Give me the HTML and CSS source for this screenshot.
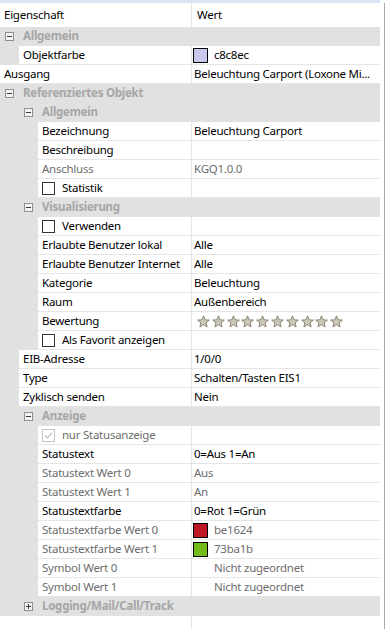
FILE: index.html
```html
<!DOCTYPE html>
<html lang="de">
<head>
    <meta charset="UTF-8">
    <meta name="viewport" content="width=device-width, initial-scale=1.0">
    <title>Eigenschaften</title>
    <link rel="stylesheet" href="styles.css">
</head>
<body>
    <svg width="0" height="0" class="defs">
        <symbol id="star" viewBox="0 0 13 13">
            <polygon points="6.5,0.8 8.1,4.8 12.4,5.1 9.1,7.8 10.1,12 6.5,9.7 2.9,12 3.9,7.8 0.6,5.1 4.9,4.8" fill="#cdc7b9" stroke="#8e8777" stroke-width="1" stroke-linejoin="round"/>
        </symbol>
        <symbol id="minus" viewBox="0 0 9 9">
            <rect x="0.5" y="0.5" width="8" height="8" fill="#f4f4f4" stroke="#8f8f8f"/>
            <rect x="2" y="4" width="5" height="1" fill="#3c3c3c"/>
        </symbol>
        <symbol id="plus" viewBox="0 0 9 9">
            <rect x="0.5" y="0.5" width="8" height="8" fill="#f4f4f4" stroke="#8f8f8f"/>
            <rect x="2" y="4" width="5" height="1" fill="#3c3c3c"/>
            <rect x="4" y="2" width="1" height="5" fill="#3c3c3c"/>
        </symbol>
    </svg>

    <div class="panel">
        <div class="strip"></div>
        <div class="grid">
            <!-- Kopfzeile -->
            <div class="head">
                <div class="hname">Eigenschaft</div>
                <div class="hval">Wert</div>
            </div>

            <div class="row cat d0"><svg class="tog"><use href="#minus"/></svg>Allgemein</div>
            <div class="row d1">
                <div class="name"><div class="lbl">Objektfarbe</div></div>
                <div class="val"><span class="swatch" style="background:#c8c8ec"></span>c8c8ec</div>
            </div>
            <div class="row d0">
                <div class="name"><div class="lbl">Ausgang</div></div>
                <div class="val">Beleuchtung Carport (Loxone Mi...</div>
            </div>

            <div class="row cat d0"><svg class="tog"><use href="#minus"/></svg>Referenziertes Objekt</div>
            <div class="row cat d1"><svg class="tog"><use href="#minus"/></svg>Allgemein</div>
            <div class="row d2">
                <div class="name"><div class="lbl">Bezeichnung</div></div>
                <div class="val">Beleuchtung Carport</div>
            </div>
            <div class="row d2">
                <div class="name"><div class="lbl">Beschreibung</div></div>
                <div class="val"></div>
            </div>
            <div class="row d2 off">
                <div class="name"><div class="lbl">Anschluss</div></div>
                <div class="val">KGQ1.0.0</div>
            </div>
            <div class="row d2">
                <div class="name"><div class="lbl"><span class="chk"></span>Statistik</div></div>
                <div class="val"></div>
            </div>

            <div class="row cat d1"><svg class="tog"><use href="#minus"/></svg>Visualisierung</div>
            <div class="row d2">
                <div class="name"><div class="lbl"><span class="chk"></span>Verwenden</div></div>
                <div class="val"></div>
            </div>
            <div class="row d2">
                <div class="name"><div class="lbl">Erlaubte Benutzer lokal</div></div>
                <div class="val">Alle</div>
            </div>
            <div class="row d2">
                <div class="name"><div class="lbl">Erlaubte Benutzer Internet</div></div>
                <div class="val">Alle</div>
            </div>
            <div class="row d2">
                <div class="name"><div class="lbl">Kategorie</div></div>
                <div class="val">Beleuchtung</div>
            </div>
            <div class="row d2">
                <div class="name"><div class="lbl">Raum</div></div>
                <div class="val">Außenbereich</div>
            </div>
            <div class="row d2">
                <div class="name"><div class="lbl">Bewertung</div></div>
                <div class="val stars">
                    <svg class="star"><use href="#star"/></svg>
                    <svg class="star"><use href="#star"/></svg>
                    <svg class="star"><use href="#star"/></svg>
                    <svg class="star"><use href="#star"/></svg>
                    <svg class="star"><use href="#star"/></svg>
                    <svg class="star"><use href="#star"/></svg>
                    <svg class="star"><use href="#star"/></svg>
                    <svg class="star"><use href="#star"/></svg>
                    <svg class="star"><use href="#star"/></svg>
                    <svg class="star"><use href="#star"/></svg>
                </div>
            </div>
            <div class="row d2">
                <div class="name"><div class="lbl"><span class="chk"></span>Als Favorit anzeigen</div></div>
                <div class="val"></div>
            </div>

            <div class="row d1">
                <div class="name"><div class="lbl">EIB-Adresse</div></div>
                <div class="val">1/0/0</div>
            </div>
            <div class="row d1">
                <div class="name"><div class="lbl">Type</div></div>
                <div class="val">Schalten/Tasten EIS1</div>
            </div>
            <div class="row d1">
                <div class="name"><div class="lbl">Zyklisch senden</div></div>
                <div class="val">Nein</div>
            </div>

            <div class="row cat d1"><svg class="tog"><use href="#minus"/></svg>Anzeige</div>
            <div class="row d2 off">
                <div class="name"><div class="lbl"><span class="chk checked"><svg viewBox="0 0 13 13"><polyline points="2.5,6.5 5.2,9.2 10.5,3.5" fill="none" stroke="#b4b4b4" stroke-width="1.3"/></svg></span>nur Statusanzeige</div></div>
                <div class="val"></div>
            </div>
            <div class="row d2">
                <div class="name"><div class="lbl">Statustext</div></div>
                <div class="val">0=Aus 1=An</div>
            </div>
            <div class="row d2 off">
                <div class="name"><div class="lbl">Statustext Wert 0</div></div>
                <div class="val">Aus</div>
            </div>
            <div class="row d2 off">
                <div class="name"><div class="lbl">Statustext Wert 1</div></div>
                <div class="val">An</div>
            </div>
            <div class="row d2">
                <div class="name"><div class="lbl">Statustextfarbe</div></div>
                <div class="val">0=Rot 1=Grün</div>
            </div>
            <div class="row d2 off">
                <div class="name"><div class="lbl">Statustextfarbe Wert 0</div></div>
                <div class="val"><span class="swatch" style="background:#be1624"></span>be1624</div>
            </div>
            <div class="row d2 off">
                <div class="name"><div class="lbl">Statustextfarbe Wert 1</div></div>
                <div class="val"><span class="swatch" style="background:#73ba1b"></span>73ba1b</div>
            </div>
            <div class="row d2 off">
                <div class="name"><div class="lbl">Symbol Wert 0</div></div>
                <div class="val noimg">Nicht zugeordnet</div>
            </div>
            <div class="row d2 off">
                <div class="name"><div class="lbl">Symbol Wert 1</div></div>
                <div class="val noimg">Nicht zugeordnet</div>
            </div>

            <div class="row cat d1"><svg class="tog"><use href="#plus"/></svg>Logging/Mail/Call/Track</div>

            <!-- leerer Bereich unten -->
            <div class="filler"><div class="fname"></div></div>
        </div>
    </div>
    <div class="gap"></div>
    <div class="edge"></div>
</body>
</html>
```

FILE: styles.css
```css
body {
    margin: 0;
    height: 629px;
    display: flex;
    font-family: "Noto Sans", "Open Sans", sans-serif;
    font-size: 11.5px;
    letter-spacing: -0.25px;
    color: #000;
    background-color: #fff;
    overflow: hidden;
}

.defs {
    position: absolute;
}

.panel {
    width: 380px;
    display: flex;
    flex-direction: column;
}

.strip {
    height: 3px;
    background-color: #d9e4f2;
}

.grid {
    flex: 1;
    display: flex;
    flex-direction: column;
}

.head {
    display: flex;
    height: 24px;
    line-height: 24px;
}

.hname {
    width: 187px;
    padding-left: 4px;
}

.hval {
    flex: 1;
    border-left: 1px solid #e5e5e5;
    padding-left: 5px;
}

.row {
    display: flex;
    height: 19px;
    line-height: 18px;
    background-color: #e1e1e1;
    white-space: nowrap;
}

.name {
    width: 191px;
    display: flex;
}

.lbl {
    flex: 1;
    display: flex;
    align-items: center;
    background-color: #fff;
    border-bottom: 1px solid #e5e5e5;
    padding-left: 4px;
    overflow: hidden;
}

.d1 .lbl {
    margin-left: 19px;
}

.d2 .lbl {
    margin-left: 38px;
}

.val {
    flex: 1;
    display: flex;
    align-items: center;
    background-color: #fff;
    border-left: 1px solid #e5e5e5;
    border-bottom: 1px solid #e5e5e5;
    padding-left: 2px;
    overflow: hidden;
}

.off .lbl,
.off .val {
    color: #6d6d6d;
}

/* Kategorien */
.cat {
    align-items: center;
    font-weight: bold;
    color: #a6a6a6;
    border-bottom: 1px solid #e1e1e1;
    box-sizing: border-box;
    line-height: 18px;
}

.cat.d0 {
    padding-left: 5px;
}

.cat.d1 {
    padding-left: 24px;
}

.tog {
    width: 9px;
    height: 9px;
    margin-right: 9px;
    flex-shrink: 0;
}

.chk {
    width: 11px;
    height: 11px;
    border: 1px solid #333;
    background-color: #fff;
    margin-right: 7px;
    flex-shrink: 0;
}

.chk.checked {
    border-color: #c4c4c4;
}

.chk svg {
    display: block;
    width: 11px;
    height: 11px;
}

.swatch {
    width: 13px;
    height: 13px;
    border: 1px solid #000;
    margin-left: -1px;
    margin-right: 6px;
    flex-shrink: 0;
}

.noimg {
    padding-left: 22px;
}

.stars {
    padding-left: 5px;
}

.star {
    width: 13px;
    height: 13px;
    margin-right: 1.8px;
    flex-shrink: 0;
}

.filler {
    flex: 1;
    display: flex;
}

.fname {
    width: 191px;
    border-right: 1px solid #e5e5e5;
}

.gap {
    width: 4px;
}

.edge {
    width: 1px;
    margin-top: 3px;
    background-color: #a9a9a9;
}
```
